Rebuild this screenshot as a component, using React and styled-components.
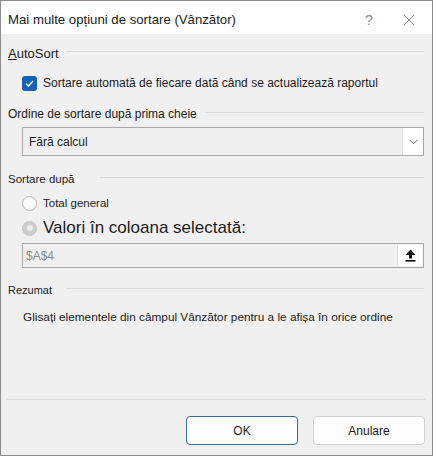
import styled, { createGlobalStyle } from 'styled-components';

const GlobalStyle = createGlobalStyle`
  html, body {
    margin: 0;
    padding: 0;
    background: #ffffff;
  }
  * {
    box-sizing: border-box;
  }
`;

const Window = styled.div`
  width: 433px;
  height: 456px;
  border: 1px solid #8c8c8c;
  background: #f0f0f0;
  display: flex;
  flex-direction: column;
  font-family: 'Liberation Sans', Arial, sans-serif;
  font-size: 12px;
  color: #1b1b1b;
`;

const TitleBar = styled.div`
  height: 33px;
  background: #ffffff;
  display: flex;
  align-items: center;
  padding: 4px 0 0 7px;
`;

const Title = styled.div`
  flex: 1;
  font-size: 13.2px;
  color: #1a1a1a;
`;

const TitleButton = styled.div`
  width: 40px;
  display: flex;
  justify-content: center;
  align-items: center;
  color: #8f8f8f;
  font-size: 15px;
  font-weight: 300;
`;

const Body = styled.div`
  flex: 1;
  display: flex;
  flex-direction: column;
  padding: 0 8px 0 7px;
`;

const SectionHeader = styled.div`
  height: 20px;
  display: flex;
  align-items: center;
  margin-top: ${(p) => p.$top}px;
  font-size: ${(p) => p.$size || 12}px;
  color: #1b1b1b;

  &::after {
    content: '';
    flex: 1;
    height: 1px;
    background: #dadada;
    margin-left: ${(p) => p.$gap || 8}px;
    transform: translateY(-2px);
  }
`;

const Row = styled.label`
  display: flex;
  align-items: center;
  gap: 6px;
  height: ${(p) => p.$h || 20}px;
  margin-top: ${(p) => p.$top || 0}px;
  padding-left: 14px;
  font-size: ${(p) => p.$size || 12}px;
  color: ${(p) => p.$color || '#1b1b1b'};
`;

const CheckBox = styled.span`
  width: 15px;
  height: 15px;
  border-radius: 3px;
  background: #1462b5;
  display: flex;
  align-items: center;
  justify-content: center;
`;

const Radio = styled.span`
  width: 15px;
  height: 15px;
  border-radius: 50%;
  border: 1px solid ${(p) => (p.$disabled ? '#c4c4c4' : '#b9b9b9')};
  background: ${(p) => (p.$disabled ? '#cdcdcd' : '#fafafa')};
  display: flex;
  align-items: center;
  justify-content: center;

  &::after {
    content: '';
    display: ${(p) => (p.$checked ? 'block' : 'none')};
    width: 6px;
    height: 6px;
    border-radius: 50%;
    background: #eeeeee;
  }
`;

const Field = styled.div`
  margin: ${(p) => p.$top}px 0 0 14px;
  height: ${(p) => p.$h}px;
  border: 1px solid #a9a9a9;
  background: #f0f0f0;
  display: flex;
  align-items: stretch;
`;

const FieldText = styled.div`
  flex: 1;
  display: flex;
  align-items: center;
  padding-left: ${(p) => p.$pad}px;
  color: ${(p) => p.$color};
  font-size: 12px;
`;

const FieldButton = styled.div`
  width: 21px;
  background: #ffffff;
  border-left: 1px solid #dedede;
  display: flex;
  align-items: center;
  justify-content: center;
`;

const Summary = styled.div`
  margin-top: 7px;
  height: 20px;
  display: flex;
  align-items: center;
  padding-left: 15px;
  font-size: 11.8px;
  color: #1b1b1b;
`;

const Footer = styled.div`
  border-top: 1px solid #dcdcdc;
  margin: 0 7px 0 6px;
  padding: 16px 0 10px;
  display: flex;
  justify-content: flex-end;
  gap: 15px;
`;

const Button = styled.button`
  width: 112px;
  height: 29px;
  border-radius: 4px;
  background: #fdfdfd;
  border: 1px solid ${(p) => (p.$primary ? '#3c6a8c' : '#d0d0d0')};
  font-family: 'Liberation Sans', Arial, sans-serif;
  font-size: 12px;
  color: #1b1b1b;
  padding: 0;
`;

function CloseIcon() {
  return (
    <svg width="12" height="12" viewBox="0 0 12 12">
      <path d="M1 1 L11 11 M11 1 L1 11" stroke="#8f8f8f" strokeWidth="1" fill="none" />
    </svg>
  );
}

function CheckIcon() {
  return (
    <svg width="11" height="11" viewBox="0 0 11 11">
      <path d="M2 5.8 L4.4 8 L9 3" stroke="#ffffff" strokeWidth="1.3" fill="none" />
    </svg>
  );
}

function ChevronIcon() {
  return (
    <svg width="9" height="6" viewBox="0 0 9 6">
      <path d="M0.5 0.8 L4.5 4.8 L8.5 0.8" stroke="#6b6b6b" strokeWidth="1" fill="none" />
    </svg>
  );
}

function UploadIcon() {
  return (
    <svg width="11" height="13" viewBox="0 0 11 13">
      <path d="M5.5 0.5 L10.5 6 L7 6 L7 9.5 L4 9.5 L4 6 L0.5 6 Z" fill="#111111" />
      <rect x="0.5" y="11" width="10" height="1.6" fill="#111111" />
    </svg>
  );
}

export default function App() {
  return (
    <>
      <GlobalStyle />
      <Window>
        <TitleBar>
          <Title>Mai multe opțiuni de sortare (Vânzător)</Title>
          <TitleButton>?</TitleButton>
          <TitleButton style={{ marginRight: 3 }}>
            <CloseIcon />
          </TitleButton>
        </TitleBar>
        <Body>
          <SectionHeader $top={9} $size={13}>
            <span>
              <u style={{ textDecorationThickness: 1 }}>A</u>utoSort
            </span>
          </SectionHeader>
          <Row $top={10} $size={12}>
            <CheckBox>
              <CheckIcon />
            </CheckBox>
            Sortare automată de fiecare dată când se actualizează raportul
          </Row>
          <SectionHeader $top={11}>Ordine de sortare după prima cheie</SectionHeader>
          <Field $top={3} $h={29}>
            <FieldText $pad={6} $color="#1b1b1b">Fără calcul</FieldText>
            <FieldButton>
              <ChevronIcon />
            </FieldButton>
          </Field>
          <SectionHeader $top={13} $size={11.5} $gap={25}>
            Sortare după
          </SectionHeader>
          <Row $top={4} $size={11.5}>
            <Radio />
            Total general
          </Row>
          <Row $top={4} $h={22} $size={17}>
            <Radio $disabled $checked />
            Valori în coloana selectată:
          </Row>
          <Field $top={4} $h={25}>
            <FieldText $pad={3} $color="#8a8a8a">$A$4</FieldText>
            <FieldButton style={{ width: 25, margin: '1px 1px 1px 0' }}>
              <UploadIcon />
            </FieldButton>
          </Field>
          <SectionHeader $top={12} $size={11} $gap={14}>
            Rezumat
          </SectionHeader>
          <Summary>Glisați elementele din câmpul Vânzător pentru a le afișa în orice ordine</Summary>
        </Body>
        <Footer>
          <Button $primary>OK</Button>
          <Button>Anulare</Button>
        </Footer>
      </Window>
    </>
  );
}
